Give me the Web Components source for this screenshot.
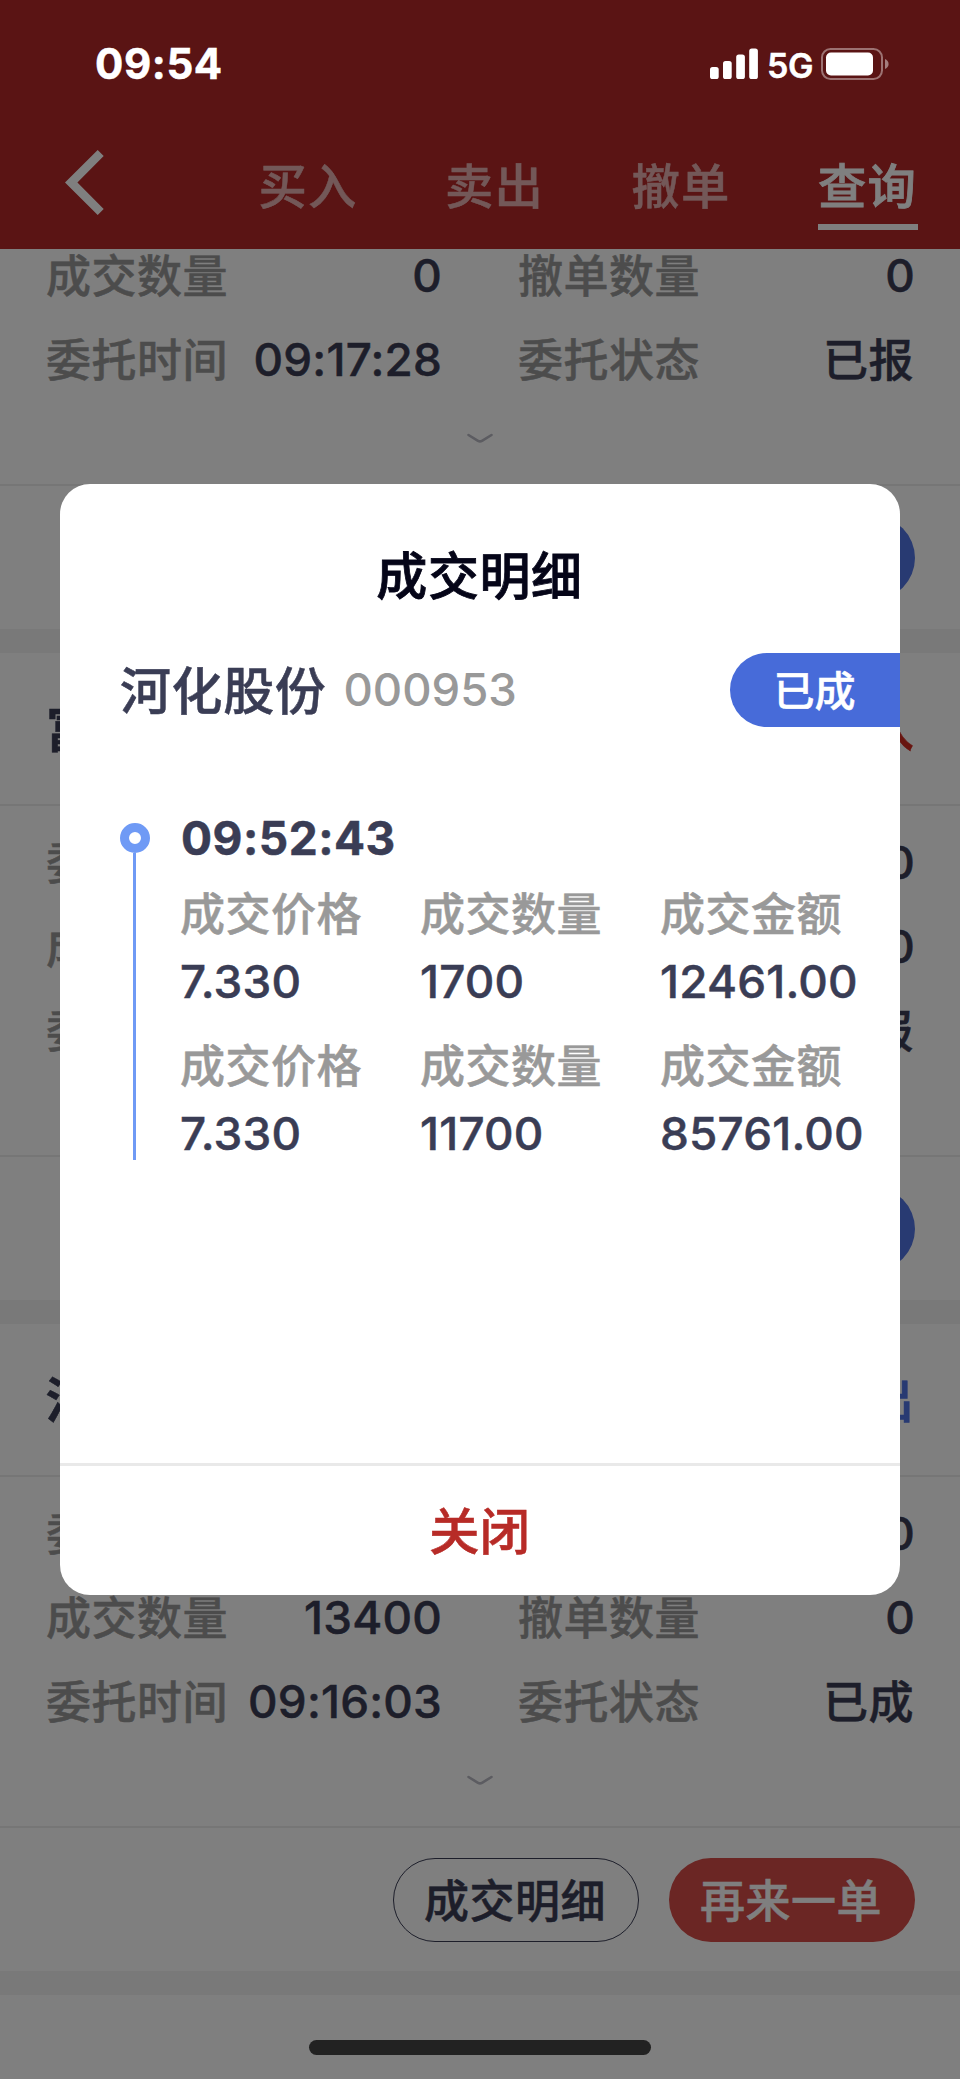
<!DOCTYPE html>
<html lang="zh-CN">
<head>
<meta charset="UTF-8">
<title>查询</title>
<style>
    body {
        margin: 0;
        font-family: Inter, "Noto Sans CJK SC", sans-serif;
        font-weight: 500;
        color: #3a3d55;
        -webkit-text-stroke: 0.5px;
    }
</style>
</head>
<body>
<trade-app>
    <trade-header slot="header">
        <trade-tab>买入</trade-tab>
        <trade-tab>卖出</trade-tab>
        <trade-tab>撤单</trade-tab>
        <trade-tab active>查询</trade-tab>
    </trade-header>

    <order-card continued>
        <order-field label="成交数量" numeric>0</order-field>
        <order-field label="撤单数量" numeric>0</order-field>
        <order-field label="委托时间" numeric>09:17:28</order-field>
        <order-field label="委托状态">已报</order-field>
        <pill-button slot="actions" kind="blue"></pill-button>
    </order-card>

    <order-card name="富" side="入">
        <order-field label="委"></order-field>
        <order-field numeric>0</order-field>
        <order-field label="成"></order-field>
        <order-field numeric>0</order-field>
        <order-field label="委"></order-field>
        <order-field>报</order-field>
        <pill-button slot="actions" kind="blue"></pill-button>
    </order-card>

    <order-card name="河" side="出" sell>
        <order-field label="委"></order-field>
        <order-field numeric>0</order-field>
        <order-field label="成交数量" numeric>13400</order-field>
        <order-field label="撤单数量" numeric>0</order-field>
        <order-field label="委托时间" numeric>09:16:03</order-field>
        <order-field label="委托状态">已成</order-field>
        <pill-button slot="actions" kind="outline">成交明细</pill-button>
        <pill-button slot="actions" kind="red">再来一单</pill-button>
    </order-card>

    <deal-dialog slot="dialog" heading="成交明细" name="河化股份" code="000953" status="已成" close="关闭">
        <deal-timeline time="09:52:43">
            <deal-item price="7.330" count="1700" amount="12461.00"></deal-item>
            <deal-item price="7.330" count="11700" amount="85761.00"></deal-item>
        </deal-timeline>
    </deal-dialog>

    <status-bar slot="status" time="09:54" network="5G"></status-bar>
</trade-app>

<script>
class BaseElement extends HTMLElement {
    connectedCallback() {
        if (this.shadowRoot) return;
        this.attachShadow({ mode: 'open' });
        this.shadowRoot.innerHTML = this.render();
    }

    attr(name) {
        return this.getAttribute(name) || '';
    }
}

class TradeApp extends BaseElement {
    render() {
        return `
            <style>
                :host {
                    position: relative;
                    display: flex;
                    flex-direction: column;
                    height: 2079px;
                    overflow: hidden;
                    background: #f2f2f2;
                }
                main {
                    flex: 1;
                    display: flex;
                    flex-direction: column;
                    gap: 24px;
                    min-height: 0;
                }
                .next { flex: 1; background: #fff; }
                .mask {
                    position: absolute;
                    inset: 0;
                    z-index: 1;
                    background: rgba(0, 0, 0, 0.5);
                }
                slot[name="dialog"]::slotted(*) {
                    position: absolute;
                    z-index: 2;
                    left: 60px;
                    top: 484px;
                }
                slot[name="status"]::slotted(*) {
                    position: absolute;
                    z-index: 2;
                    left: 0;
                    top: 0;
                }
                .home {
                    position: absolute;
                    z-index: 2;
                    left: 309px;
                    bottom: 24px;
                    width: 342px;
                    height: 15px;
                    border-radius: 8px;
                    background: #222;
                }
            </style>
            <slot name="header"></slot>
            <main>
                <slot></slot>
                <div class="next"></div>
            </main>
            <div class="mask"></div>
            <slot name="dialog"></slot>
            <slot name="status"></slot>
            <div class="home"></div>
        `;
    }
}

class StatusBar extends BaseElement {
    render() {
        return `
            <style>
                :host {
                    display: flex;
                    align-items: center;
                    justify-content: space-between;
                    box-sizing: border-box;
                    width: 960px;
                    height: 128px;
                    padding: 0 71px 0 95px;
                    color: #fff;
                }
                .time { font-size: 42px; font-weight: 700; line-height: 50px; letter-spacing: 0.6px; }
                .right { display: flex; align-items: center; }
                .net { font-size: 34px; font-weight: 600; line-height: 40px; margin: 3px 7px 0 9px; width: 47px; letter-spacing: -0.5px; }
                svg { display: block; }
            </style>
            <span class="time">${this.attr('time')}</span>
            <div class="right">
                <svg width="48" height="32" fill="#fff">
                    <rect x="0" y="19" width="8.7" height="12" rx="2.6"/>
                    <rect x="13" y="13" width="8.7" height="18" rx="2.6"/>
                    <rect x="26.2" y="6.5" width="8.7" height="24.5" rx="2.6"/>
                    <rect x="39.2" y="0.4" width="8.7" height="30.6" rx="2.6"/>
                </svg>
                <span class="net">${this.attr('network')}</span>
                <svg width="68" height="32">
                    <rect x="1" y="1" width="60" height="30" rx="8.5" fill="none" stroke="#fff" stroke-opacity="0.4" stroke-width="2"/>
                    <rect x="5" y="4.5" width="47" height="23" rx="5" fill="#fff"/>
                    <path d="M64 11 C66 12 67.6 13.5 67.6 16 C67.6 18.5 66 20 64 21 Z" fill="#fff" fill-opacity="0.45"/>
                </svg>
            </div>
        `;
    }
}

class TradeHeader extends BaseElement {
    render() {
        return `
            <style>
                :host {
                    display: flex;
                    flex: none;
                    align-items: flex-end;
                    justify-content: space-between;
                    box-sizing: border-box;
                    height: 249px;
                    padding: 0 42px 19px 65px;
                    background: #b42828;
                    position: relative;
                    z-index: 1;
                }
                svg { display: block; margin-bottom: 15px; }
                nav { display: flex; gap: 86.5px; }
            </style>
            <svg width="39" height="65" viewBox="0 0 39 65">
                <path d="M32.7 0 L38.7 6 L12.4 32.5 L38.7 59 L32.7 65 L0 32.5 Z" fill="#fff"/>
            </svg>
            <nav><slot></slot></nav>
        `;
    }
}

class TradeTab extends BaseElement {
    render() {
        return `
            <style>
                :host {
                    display: block;
                    width: 100px;
                    box-sizing: border-box;
                    padding-bottom: 6px;
                    border-bottom: 6px solid transparent;
                    font-size: 48.3px;
                    letter-spacing: 1.2px;
                    line-height: 62px;
                    color: #e6b1b1;
                    white-space: nowrap;
                }
                :host([active]) {
                    color: #fff;
                    border-color: #fff;
                    -webkit-text-stroke: 0.8px;
                }
            </style>
            <slot></slot>
        `;
    }
}

class OrderCard extends BaseElement {
    render() {
        const continued = this.hasAttribute('continued');
        const head = `
            <header>
                <span>${this.attr('name')}</span>
                <span class="side">${this.attr('side')}</span>
            </header>
        `;
        return `
            <style>
                :host {
                    display: block;
                    flex: none;
                    background: #fff;
                }
                /* scrolled partly under the header */
                :host([continued]) { margin-top: -15px; }
                header {
                    display: flex;
                    align-items: center;
                    justify-content: space-between;
                    box-sizing: border-box;
                    height: 153px;
                    padding: 2px 46px 0;
                    border-bottom: 2px solid #ececec;
                    font-size: 49px;
                    font-weight: 700;
                    line-height: 64px;
                }
                .side { color: #d12a20; font-weight: 500; }
                :host([sell]) .side { color: #5074e4; }
                .fields {
                    display: grid;
                    grid-template-columns: 396px 397px;
                    grid-auto-rows: 84px;
                    column-gap: 76px;
                    padding: 15px 45px 0 46px;
                }
                :host([continued]) .fields { padding-top: 0; }
                .more {
                    display: flex;
                    justify-content: center;
                    height: 51px;
                    padding-top: 31px;
                    border-bottom: 2px solid #ececec;
                }
                footer {
                    display: flex;
                    justify-content: flex-end;
                    gap: 30px;
                    height: 84px;
                    padding: 30px 45px 29px;
                }
            </style>
            ${continued ? '' : head}
            <div class="fields"><slot></slot></div>
            <div class="more">
                <svg width="26" height="12" viewBox="0 0 26 12">
                    <path d="M1.5 2 L11 7.8 Q13 9 15 7.8 L24.5 2" fill="none" stroke="#b8b8c2" stroke-width="2.6" stroke-linecap="round"/>
                </svg>
            </div>
            <footer><slot name="actions"></slot></footer>
        `;
    }
}

class OrderField extends BaseElement {
    render() {
        return `
            <style>
                :host {
                    display: flex;
                    align-items: center;
                    justify-content: space-between;
                    font-size: 45px;
                    letter-spacing: 0.5px;
                    line-height: 56px;
                    white-space: nowrap;
                }
                .label { color: #999; padding-top: 2px; }
                .value { padding: 2px 1px 0 0; }
                :host([numeric]) .value {
                    padding: 0;
                    font-size: 45.8px;
                    letter-spacing: 0.2px;
                }
            </style>
            <span class="label">${this.attr('label')}</span>
            <span class="value"><slot></slot></span>
        `;
    }
}

class PillButton extends BaseElement {
    render() {
        return `
            <style>
                :host {
                    display: flex;
                    align-items: center;
                    justify-content: center;
                    box-sizing: border-box;
                    width: 246px;
                    height: 84px;
                    padding: 3px 2px 0 0;
                    border-radius: 42px;
                    font-size: 45px;
                    letter-spacing: 0.5px;
                    line-height: 56px;
                    color: #fff;
                    white-space: nowrap;
                }
                :host([kind="blue"]) { background: #5074e4; }
                :host([kind="red"]) { background: #d64c48; }
                :host([kind="outline"]) { border: 1.5px solid #3a3d55; color: #3a3d55; }
            </style>
            <slot></slot>
        `;
    }
}

class DealDialog extends BaseElement {
    render() {
        return `
            <style>
                :host {
                    display: flex;
                    flex-direction: column;
                    width: 840px;
                    height: 1111px;
                    border-radius: 30px;
                    background: #fff;
                    overflow: hidden;
                    white-space: nowrap;
                }
                h2 {
                    margin: 0;
                    padding: 61px 1px 44px 0;
                    font-size: 51px;
                    font-weight: 500;
                    letter-spacing: 0.6px;
                    line-height: 64px;
                    text-align: center;
                    color: #050518;
                    -webkit-text-stroke: 0.8px;
                }
                .stock {
                    display: flex;
                    align-items: center;
                    height: 74px;
                    padding-left: 60px;
                    line-height: 74px;
                }
                .name { padding-top: 3px; font-size: 51px; letter-spacing: 0.6px; }
                .code { flex: 1; margin-left: 17px; font-size: 45.5px; color: #999; -webkit-text-stroke: 0; }
                .status {
                    box-sizing: border-box;
                    width: 170px;
                    height: 74px;
                    padding: 1px 1px 0 0;
                    border-radius: 37px 0 0 37px;
                    background: #476bd9;
                    color: #fff;
                    font-size: 41px;
                    text-align: center;
                }
                .content { flex: 1; padding: 80px 0 0 60px; }
                footer {
                    height: 129px;
                    padding-right: 1px;
                    border-top: 3px solid #e9e9e9;
                    font-size: 50.5px;
                    line-height: 131px;
                    text-align: center;
                    color: #b72b27;
                }
            </style>
            <h2>${this.attr('heading')}</h2>
            <div class="stock">
                <span class="name">${this.attr('name')}</span>
                <span class="code">${this.attr('code')}</span>
                <span class="status">${this.attr('status')}</span>
            </div>
            <div class="content"><slot></slot></div>
            <footer>${this.attr('close')}</footer>
        `;
    }
}

class DealTimeline extends BaseElement {
    render() {
        return `
            <style>
                :host { display: flex; gap: 30px; height: 353px; }
                .rail {
                    display: flex;
                    flex-direction: column;
                    width: 30px;
                    padding-top: 16px;
                }
                .dot {
                    box-sizing: border-box;
                    height: 30px;
                    border: 9px solid #6f9af5;
                    border-radius: 50%;
                }
                .line { flex: 1; width: 3px; margin-left: 13px; background: #6f9af5; }
                .time {
                    height: 65px;
                    padding: 2px 0 0 1px;
                    font-size: 46px;
                    font-weight: 700;
                    letter-spacing: 0.5px;
                    line-height: 58px;
                }
            </style>
            <div class="rail">
                <div class="dot"></div>
                <div class="line"></div>
            </div>
            <div>
                <div class="time">${this.attr('time')}</div>
                <slot></slot>
            </div>
        `;
    }
}

class DealItem extends BaseElement {
    render() {
        return `
            <style>
                :host {
                    display: grid;
                    grid-template-columns: 240px 240px 240px;
                    grid-template-rows: 79px 73px;
                    align-items: center;
                    font-size: 45px;
                    letter-spacing: 0.5px;
                    line-height: 56px;
                }
                .label { padding-top: 2px; color: #999; }
                .value {
                    padding-bottom: 16px;
                    font-size: 45.8px;
                    letter-spacing: 0.2px;
                }
            </style>
            <span class="label">成交价格</span>
            <span class="label">成交数量</span>
            <span class="label">成交金额</span>
            <span class="value">${this.attr('price')}</span>
            <span class="value">${this.attr('count')}</span>
            <span class="value">${this.attr('amount')}</span>
        `;
    }
}

customElements.define('trade-app', TradeApp);
customElements.define('status-bar', StatusBar);
customElements.define('trade-header', TradeHeader);
customElements.define('trade-tab', TradeTab);
customElements.define('order-card', OrderCard);
customElements.define('order-field', OrderField);
customElements.define('pill-button', PillButton);
customElements.define('deal-dialog', DealDialog);
customElements.define('deal-timeline', DealTimeline);
customElements.define('deal-item', DealItem);
</script>
</body>
</html>
